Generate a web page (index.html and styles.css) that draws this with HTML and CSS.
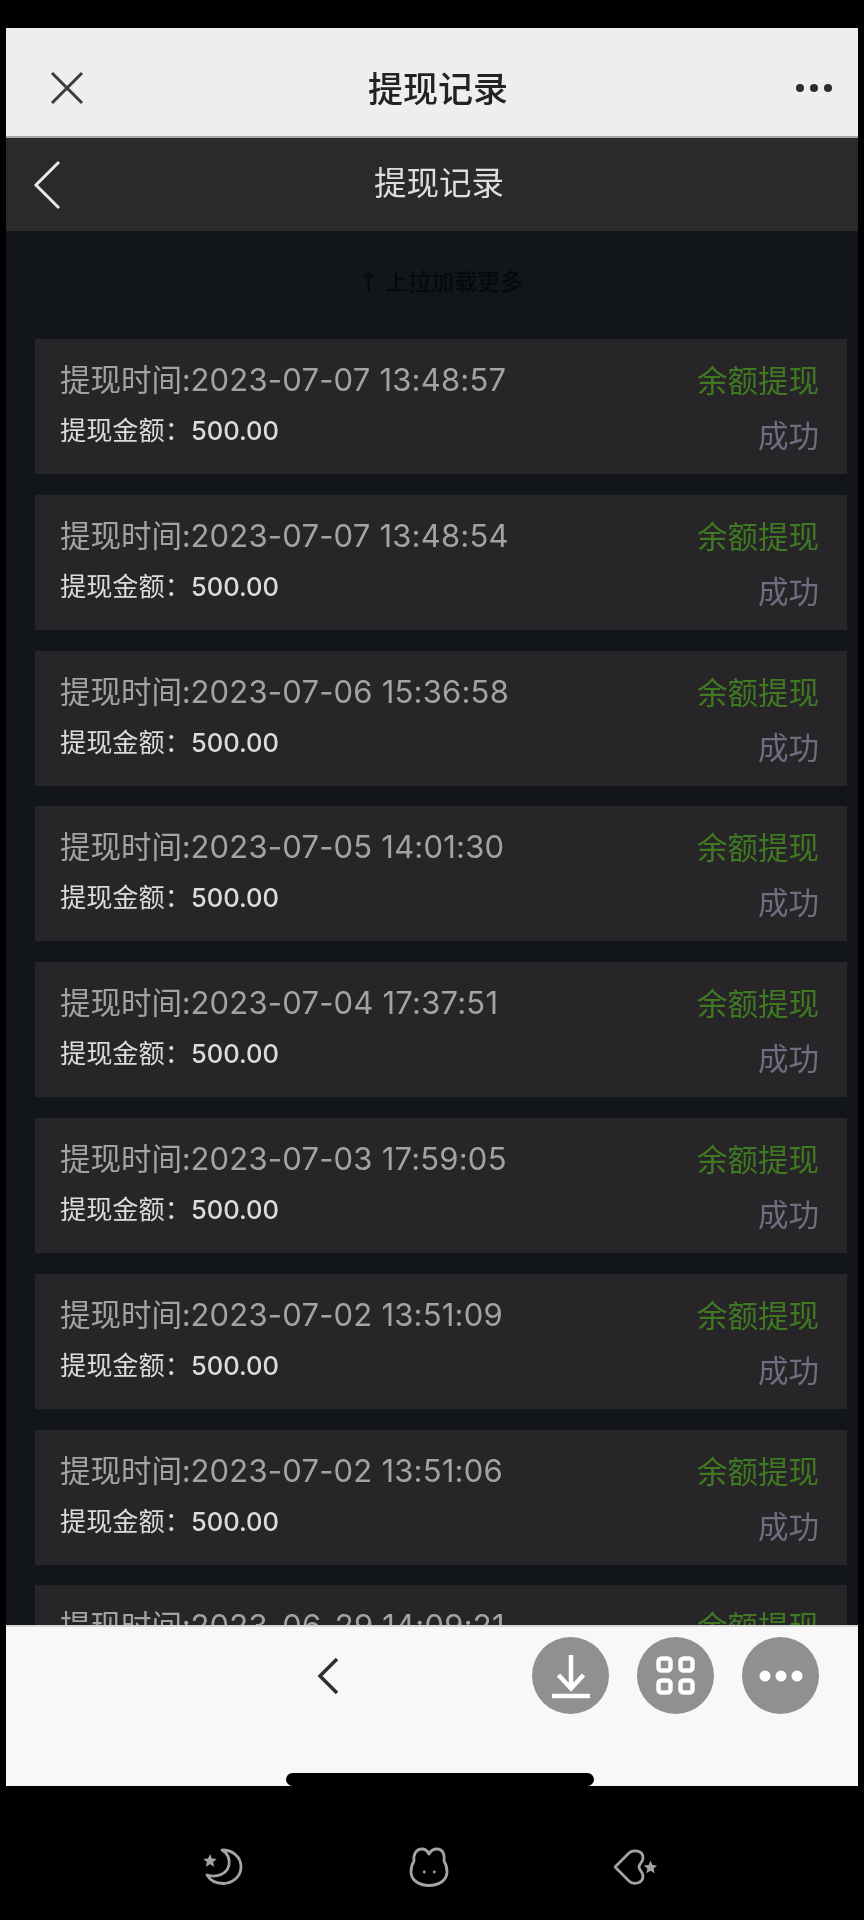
FILE: index.html
```html
<!DOCTYPE html>
<html lang="zh">
<head>
<meta charset="utf-8">
<title>提现记录</title>
<link rel="stylesheet" href="styles.css">
</head>
<body>
<div class="screen">
  <header class="wx-bar">
    <svg class="wx-close" width="34" height="34" viewBox="0 0 34 34"><path d="M2 2 L32 32 M32 2 L2 32"/></svg>
    <h1 class="wx-title">提现记录</h1>
    <svg class="wx-more" width="38" height="10" viewBox="0 0 38 10"><circle cx="5" cy="5" r="4"/><circle cx="19" cy="5" r="4"/><circle cx="33" cy="5" r="4"/></svg>
  </header>
  <header class="app-bar">
    <svg class="app-back" width="28" height="50" viewBox="0 0 28 50"><path d="M26 2 L3 25 L26 48"/></svg>
    <h2 class="app-title">提现记录</h2>
  </header>
  <main class="content">
    <p class="pull-hint">↑ 上拉加载更多</p>
    <ul class="list">
      <li class="card"><div class="col"><span class="time">提现时间:<span class="num">2023-07-07 13:48:57</span></span><span class="amount">提现金额：<span class="num">500.00</span></span></div><div class="col right"><span class="kind">余额提现</span><span class="state">成功</span></div></li>
      <li class="card"><div class="col"><span class="time">提现时间:<span class="num">2023-07-07 13:48:54</span></span><span class="amount">提现金额：<span class="num">500.00</span></span></div><div class="col right"><span class="kind">余额提现</span><span class="state">成功</span></div></li>
      <li class="card"><div class="col"><span class="time">提现时间:<span class="num">2023-07-06 15:36:58</span></span><span class="amount">提现金额：<span class="num">500.00</span></span></div><div class="col right"><span class="kind">余额提现</span><span class="state">成功</span></div></li>
      <li class="card"><div class="col"><span class="time">提现时间:<span class="num">2023-07-05 14:01:30</span></span><span class="amount">提现金额：<span class="num">500.00</span></span></div><div class="col right"><span class="kind">余额提现</span><span class="state">成功</span></div></li>
      <li class="card"><div class="col"><span class="time">提现时间:<span class="num">2023-07-04 17:37:51</span></span><span class="amount">提现金额：<span class="num">500.00</span></span></div><div class="col right"><span class="kind">余额提现</span><span class="state">成功</span></div></li>
      <li class="card"><div class="col"><span class="time">提现时间:<span class="num">2023-07-03 17:59:05</span></span><span class="amount">提现金额：<span class="num">500.00</span></span></div><div class="col right"><span class="kind">余额提现</span><span class="state">成功</span></div></li>
      <li class="card"><div class="col"><span class="time">提现时间:<span class="num">2023-07-02 13:51:09</span></span><span class="amount">提现金额：<span class="num">500.00</span></span></div><div class="col right"><span class="kind">余额提现</span><span class="state">成功</span></div></li>
      <li class="card"><div class="col"><span class="time">提现时间:<span class="num">2023-07-02 13:51:06</span></span><span class="amount">提现金额：<span class="num">500.00</span></span></div><div class="col right"><span class="kind">余额提现</span><span class="state">成功</span></div></li>
      <li class="card"><div class="col"><span class="time">提现时间:<span class="num">2023-06-29 14:09:21</span></span><span class="amount">提现金额：<span class="num">500.00</span></span></div><div class="col right"><span class="kind">余额提现</span><span class="state">成功</span></div></li>
    </ul>
  </main>
  <footer class="toolbar">
    <div class="tool-row">
      <svg class="tool-back" width="24" height="40" viewBox="0 0 24 40"><path d="M21 3 L4 20 L21 37"/></svg>
      <button class="round">
        <svg width="40" height="46" viewBox="0 0 40 46"><path class="wl" d="M20 2 V35 M7.500 22 L20 35.500 L32.500 22"/><path class="wl" d="M1 43 H39"/></svg>
      </button>
      <button class="round">
        <svg width="39" height="39" viewBox="0 0 39 39"><rect class="wl" x="2.500" y="2.500" width="12" height="12" rx="3"/><rect class="wl" x="24.500" y="2.500" width="12" height="12" rx="3"/><rect class="wl" x="2.500" y="24.500" width="12" height="12" rx="3"/><rect class="wl" x="24.500" y="24.500" width="12" height="12" rx="3"/></svg>
      </button>
      <button class="round">
        <svg width="44" height="12" viewBox="0 0 44 12"><circle class="wf" cx="6" cy="6" r="5.500"/><circle class="wf" cx="22" cy="6" r="5.500"/><circle class="wf" cx="38" cy="6" r="5.500"/></svg>
      </button>
    </div>
    <div class="home-bar"></div>
  </footer>
</div>
<nav class="deco">
  <svg width="44" height="40" viewBox="0 0 44 40"><path class="gl" d="M22 3 C33 3 41 10 41 20 C41 30 32 36.500 23 36.500 C16 36.500 10 33 7 28 C17 31 27 27 29 18 C30 11 27 6 22 3 Z"/><path class="gf" d="M10 7 L11.900 11.400 L16.800 11.900 L13.100 15 L14.200 19.700 L10 17.300 L5.800 19.700 L6.900 15 L3.200 11.900 L8.100 11.400 Z"/></svg>
  <svg width="44" height="40" viewBox="0 0 44 40"><path class="gl" d="M7 14 C6 8 9 2 15 2 C18 2 20.500 4 22 7 C23.500 4 26 2 30 2 C36 2 38 8 37 14 C39 17 40 21 40 25 C40 33 32 38.500 22 38.500 C12 38.500 4 33 4 25 C4 21 5 17 7 14 Z"/><circle class="gf" cx="17.300" cy="25" r="1.400"/><circle class="gf" cx="27.300" cy="25" r="1.400"/></svg>
  <svg width="44" height="40" viewBox="0 0 44 40"><path class="gl" d="M1 20 L15 6 C19 2.500 29 3 29 11 C29 15 25 17 25 20 C25 23 29 25 29 29 C29 37 19 38 15 34 Z"/><path class="gf" d="M36.500 13.500 L38.400 18 L43.200 18.400 L39.600 21.500 L40.700 26.200 L36.500 23.800 L32.300 26.200 L33.400 21.500 L29.800 18.400 L34.600 18 Z"/></svg>
</nav>
</body>
</html>
```
FILE: styles.css
```css
* { box-sizing: border-box; }
html, body { margin: 0; padding: 0; height: 1920px; overflow: hidden; background: #000; }
body {
  padding-top: 28px;
  font-family: "Liberation Sans", "Noto Sans CJK SC", sans-serif;
}
h1, h2, p, ul { margin: 0; padding: 0; font-weight: normal; }
ul { list-style: none; }

.screen {
  margin: 0 6px 0 6px;
  height: 1758px;
  display: flex;
  flex-direction: column;
  overflow: hidden;
  filter: blur(0.5px);
}

.wx-bar {
  height: 110px;
  flex: none;
  background: #eeeeee;
  border-bottom: 2px solid #a5a5a5;
  display: flex;
  align-items: center;
  justify-content: space-between;
  padding: 12px 25px 0 44px;
}
.wx-close path { fill: none; stroke: #3c3c3c; stroke-width: 3; }
.wx-more circle { fill: #2c2c2c; }
.wx-title {
  font-size: 35px;
  font-weight: 500;
  color: #222;
  font-family: "Noto Sans CJK SC", sans-serif;
  padding-right: 3px;
  margin-top: -4px;
}

.app-bar {
  height: 93px;
  flex: none;
  background: #2a2a2b;
  display: flex;
  align-items: center;
  padding-left: 27px;
}
.app-back path { fill: none; stroke: #e8e8e8; stroke-width: 3; }
.app-title {
  font-size: 32.500px;
  color: #dedede;
  font-family: "Noto Sans CJK SC", sans-serif;
  margin-left: 313px;
  margin-top: -8px;
}

.content {
  flex: 1;
  min-height: 0;
  overflow: hidden;
  background: #12161a;
  padding: 0 11px 0 29px;
}
.pull-hint {
  height: 108px;
  padding: 25px 0 0 322px;
  line-height: 48px;
  font-size: 23px;
  font-weight: 500;
  color: #07090b;
  font-family: "Noto Sans CJK SC", sans-serif;
}
.list { display: flex; flex-direction: column; gap: 20.800px; }
.card {
  height: 135px;
  flex: none;
  background: #272527;
  display: flex;
  justify-content: space-between;
  padding: 19px 28px 0 25px;
}
.col { display: flex; flex-direction: column; gap: 9px; }
.right { align-items: flex-end; gap: 15px; }
.time { font-size: 30.500px; line-height: 40px; color: #a3a3a3; font-family: "Noto Sans CJK SC", sans-serif; }
.time .num { font-size: 31px; letter-spacing: 0.2px; }
.amount { font-size: 26.200px; line-height: 40px; color: #dcdcdc; font-family: "Noto Sans CJK SC", sans-serif; }
.num { font-family: Inter, "Liberation Sans", sans-serif; }
.amount .num { font-size: 25.500px; font-weight: 500; }
.kind { font-size: 30.500px; line-height: 40px; margin-top: 1px; color: #3f7a22; font-family: "Noto Sans CJK SC", sans-serif; }
.state { font-size: 30.500px; line-height: 40px; color: #6c6f80; font-family: "Noto Sans CJK SC", sans-serif; }

.toolbar {
  height: 161px;
  flex: none;
  background: #f8f8f8;
  border-top: 2px solid #d8d8d8;
  display: flex;
  flex-direction: column;
}
.tool-row {
  display: flex;
  align-items: center;
  gap: 28px;
  padding: 10px 39px 0 310px;
}
.tool-back { margin-right: auto; }
.tool-back path { fill: none; stroke: #2f2f2f; stroke-width: 3.500; }
.round {
  width: 77px;
  height: 77px;
  border: 0;
  padding: 0;
  border-radius: 50%;
  background: #918f90;
  display: flex;
  align-items: center;
  justify-content: center;
}
.wl { fill: none; stroke: #fdfdfd; stroke-width: 4.500; }
.wf { fill: #fdfdfd; }
.home-bar {
  width: 308px;
  height: 13px;
  margin: auto 0 0 280px;
  background: #000;
  border-radius: 7px;
}

.deco {
  display: flex;
  justify-content: center;
  gap: 163px;
  padding: 61px 6px 0 0;
}
.gl { fill: none; stroke: #a4a4a4; stroke-width: 2.800; stroke-linejoin: round; }
.gf { fill: #a4a4a4; }
```
